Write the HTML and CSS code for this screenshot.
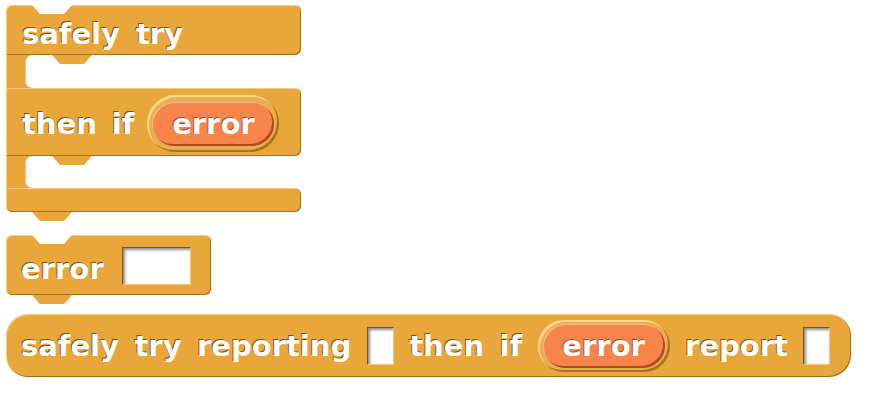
FILE: index.html
```html
<!DOCTYPE html>
<html>
<head>
<meta charset="utf-8">
<link rel="stylesheet" href="styles.css">
</head>
<body>
<div class="canvas">
  <div class="cblock">
    <div class="arm arm-top notch">
      <span class="w">safely</span><span class="w">try</span>
    </div>
    <div class="slot"><div class="hole"></div></div>
    <div class="arm arm-mid">
      <span class="w">then</span><span class="w">if</span>
      <span class="ring"><span class="var">error</span></span>
    </div>
    <div class="slot slot2"><div class="hole"></div></div>
    <div class="arm arm-foot"></div>
  </div>

  <div class="cmd notch">
    <span class="w">error</span><span class="input wide"></span>
  </div>

  <div class="reporter">
    <span class="w">safely</span><span class="w">try</span><span class="w">reporting</span>
    <span class="input"></span>
    <span class="w">then</span><span class="w">if</span>
    <span class="ring ring-r"><span class="var">error</span></span>
    <span class="w">report</span>
    <span class="input"></span>
  </div>
</div>
</body>
</html>
```
FILE: styles.css
```css
body {
  margin: 0;
  background: #ffffff;
  font-family: "DejaVu Sans", "Verdana", sans-serif;
  font-weight: bold;
  font-size: 29px;
  color: #ffffff;
}

.canvas {
  display: flex;
  flex-direction: column;
  align-items: flex-start;
  padding: 5px 0 0 6px;
}

.w {
  line-height: 32px;
  height: 32px;
  white-space: nowrap;
  text-shadow: -1px -1px 0 rgba(85, 55, 5, 0.75);
}

/* ---------- C block ---------- */
.cblock {
  width: 295px;
  display: flex;
  flex-direction: column;
  margin-bottom: 23px;
}

.arm {
  position: relative;
  box-sizing: border-box;
  display: flex;
  align-items: center;
  gap: 16px;
  padding-left: 16px;
  background: #e9a63b;
  box-shadow: inset 1px 1px 0 rgba(255, 232, 180, 0.55),
              inset -1px -1px 0 rgba(120, 78, 12, 0.6);
}

.arm-top {
  height: 50px;
  align-items: flex-start;
  padding-top: 13px;
  border-radius: 6px 6px 6px 0;
}

.arm-mid {
  height: 68px;
  padding-top: 3px;
  gap: 15px;
  border-radius: 0 6px 6px 0;
}

.arm-mid .ring {
  margin-left: -2px;
}

.arm-foot {
  height: 24px;
  border-radius: 0 6px 6px 6px;
}

.slot {
  height: 33px;
  display: flex;
  padding-left: 19px;
  background: #e9a63b;
  box-shadow: inset 1px 0 0 rgba(255, 232, 180, 0.55);
}

.slot2 {
  height: 32px;
}

.hole {
  flex: 1;
  background: #ffffff;
  border-radius: 7px 0 0 7px;
  box-shadow: inset 1px 0 0 rgba(150, 100, 20, 0.35);
}

/* tab hanging into the C slot */
.arm-top::after,
.arm-mid::after {
  content: "";
  position: absolute;
  top: 100%;
  left: 46px;
  width: 40px;
  height: 9px;
  background: #e9a63b;
  clip-path: polygon(0 0, 100% 0, 80% 100%, 20% 100%);
}

/* top notch cut into the block */
.notch::before {
  content: "";
  position: absolute;
  top: 0;
  left: 26px;
  width: 40px;
  height: 9px;
  background: #ffffff;
  clip-path: polygon(0 0, 100% 0, 80% 100%, 20% 100%);
}

/* bottom tab */
.arm-foot::after,
.cmd::after {
  content: "";
  position: absolute;
  top: 100%;
  left: 26px;
  width: 40px;
  height: 9px;
  background: #e9a63b;
  clip-path: polygon(0 0, 100% 0, 80% 100%, 20% 100%);
}

/* ---------- command block "error" ---------- */
.cmd {
  position: relative;
  box-sizing: border-box;
  width: 205px;
  height: 60px;
  display: flex;
  align-items: flex-start;
  gap: 18px;
  padding: 12px 0 0 15px;
  margin-bottom: 19px;
  background: #e9a63b;
  border-radius: 6px;
  box-shadow: inset 1px 1px 0 rgba(255, 232, 180, 0.55),
              inset -1px -1px 0 rgba(120, 78, 12, 0.6);
}

.cmd .w {
  margin-top: 6px;
}

/* ---------- reporter ---------- */
.reporter {
  box-sizing: border-box;
  height: 63px;
  display: flex;
  align-items: center;
  gap: 15.5px;
  padding: 0 21px 0 15px;
  background: #e9a63b;
  border-radius: 22px;
  box-shadow: inset 1px 1px 0 rgba(255, 232, 180, 0.55),
              inset -1px -1px 0 rgba(120, 78, 12, 0.6);
}

/* ---------- inputs ---------- */
.input {
  box-sizing: border-box;
  width: 27px;
  height: 38px;
  flex: none;
  background: #ffffff;
  border-top: 1px solid #7a5516;
  border-left: 1px solid #7a5516;
  border-right: 1px solid #f3c879;
  border-bottom: 1px solid #f3c879;
  box-shadow: inset 2px 2px 3px rgba(0, 0, 0, 0.45);
}

.input.wide {
  width: 69px;
}

/* ---------- ring + variable ---------- */
.ring {
  box-sizing: border-box;
  flex: none;
  width: 132px;
  height: 57px;
  display: flex;
  align-items: center;
  justify-content: center;
  border-radius: 29px;
  background: #ebae4d;
  box-shadow: inset 2px 2px 0 rgba(255, 226, 160, 0.8),
              inset -2px -2px 0 rgba(150, 100, 25, 0.8);
}

.ring-r {
  height: 52px;
  border-radius: 26px;
}

.var {
  box-sizing: border-box;
  width: 122px;
  height: 44px;
  display: flex;
  align-items: center;
  justify-content: center;
  border-radius: 22px;
  background: #f7844b;
  line-height: 32px;
  text-shadow: -1px -1px 0 rgba(120, 40, 10, 0.6);
  box-shadow: inset 1px 1px 0 rgba(255, 190, 150, 0.9),
              inset -2px -2px 0 rgba(170, 70, 25, 0.9);
}
```
